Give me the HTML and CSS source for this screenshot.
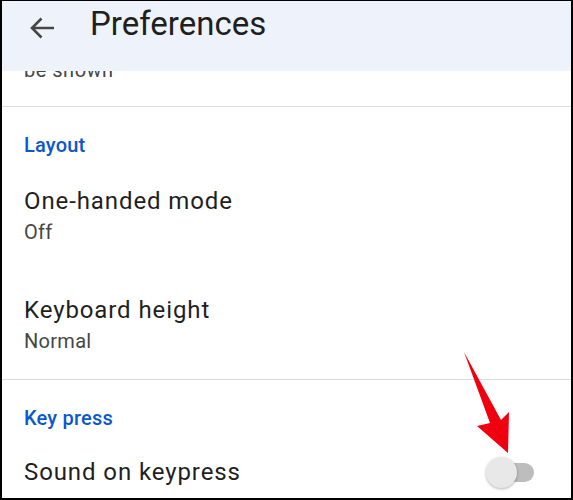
FILE: index.html
```html
<!DOCTYPE html>
<html lang="en">
<head>
    <meta charset="UTF-8">
    <meta name="viewport" content="width=device-width, initial-scale=1.0">
    <title>Preferences</title>
    <link rel="stylesheet" href="styles.css">
</head>
<body>
    <div class="frame">
        <header class="appbar">
            <svg class="back" width="26" height="22" viewBox="0 0 26 22">
                <path d="M3 11H25M12.5 1.5L3 11l9.5 9.5" fill="none" stroke="#444746" stroke-width="2.6"/>
            </svg>
            <h1>Preferences</h1>
        </header>

        <div class="list">
            <div class="cut-off">be shown</div>
            <hr class="divider">

            <div class="category">Layout</div>
            <div class="item">
                <div class="title">One-handed mode</div>
                <div class="summary">Off</div>
            </div>
            <div class="item">
                <div class="title">Keyboard height</div>
                <div class="summary">Normal</div>
            </div>
            <hr class="divider">

            <div class="category">Key press</div>
            <div class="item switch-row">
                <div class="title">Sound on keypress</div>
                <span class="switch"><span class="thumb"></span></span>
            </div>
        </div>

        <svg class="pointer" width="60" height="110" viewBox="0 0 60 110">
            <polygon points="3,2 40,70 48,62 47,103 16,76 29,73" fill="#f0000f"/>
        </svg>
    </div>
</body>
</html>
```

FILE: styles.css
```css
body {
    margin: 0;
    font-family: Roboto, "Noto Sans", sans-serif;
    background: #fff;
}
.frame {
    position: relative;
    width: 573px;
    height: 500px;
    box-sizing: border-box;
    border-top: 1px solid #000;
    border-left: 2px solid #000;
    border-right: 2px solid #000;
    border-bottom: 2px solid #000;
    overflow: hidden;
    display: flex;
    flex-direction: column;
}
.appbar {
    height: 70px;
    flex-shrink: 0;
    background: #eef3fb;
    display: flex;
    align-items: flex-start;
    padding-top: 5px;
    box-sizing: border-box;
    margin-left: -2px;
    position: relative;
    z-index: 1;
}
.back {
    margin: 11px 0 0 29px;
}
.appbar h1 {
    margin: 0 0 0 35px;
    font-size: 33px;
    font-weight: 400;
    color: #1f1f1f;
    line-height: 36px;
}
.list {
    flex: 1;
}
.cut-off {
    margin-top: -12px;
    padding-left: 22px;
    font-size: 20px;
    letter-spacing: 0.5px;
    line-height: 22px;
    color: #444746;
    height: 22px;
}
.divider {
    border: none;
    border-top: 1px solid #dcdcdc;
    margin: 25px 0 0;
}
.category {
    padding: 26px 22px 0;
    font-size: 20px;
    letter-spacing: 0.2px;
    font-weight: 500;
    color: #0b57d0;
    line-height: 24px;
}
.item {
    padding: 30px 22px 0;
}
.item + .item {
    padding-top: 51px;
}
.title {
    font-size: 24px;
    letter-spacing: 0.9px;
    color: #1f1f1f;
    line-height: 28px;
}
.summary {
    font-size: 20px;
    letter-spacing: 0.3px;
    color: #444746;
    line-height: 26px;
    margin-top: 4px;
}
.item + .divider {
    margin-top: 25px;
}
.switch-row {
    display: flex;
    align-items: center;
    justify-content: space-between;
    padding-top: 28px;
    padding-right: 37px;
}
.switch {
    position: relative;
    width: 44px;
    height: 19px;
    border-radius: 10px;
    background: #bdbdbd;
}
.thumb {
    position: absolute;
    left: -4px;
    top: -6px;
    width: 31px;
    height: 31px;
    border-radius: 50%;
    background: #e8e8e8;
    box-shadow: 0 1px 3px rgba(0, 0, 0, 0.3);
}
.pointer {
    position: absolute;
    left: 459px;
    top: 349px;
}
```
